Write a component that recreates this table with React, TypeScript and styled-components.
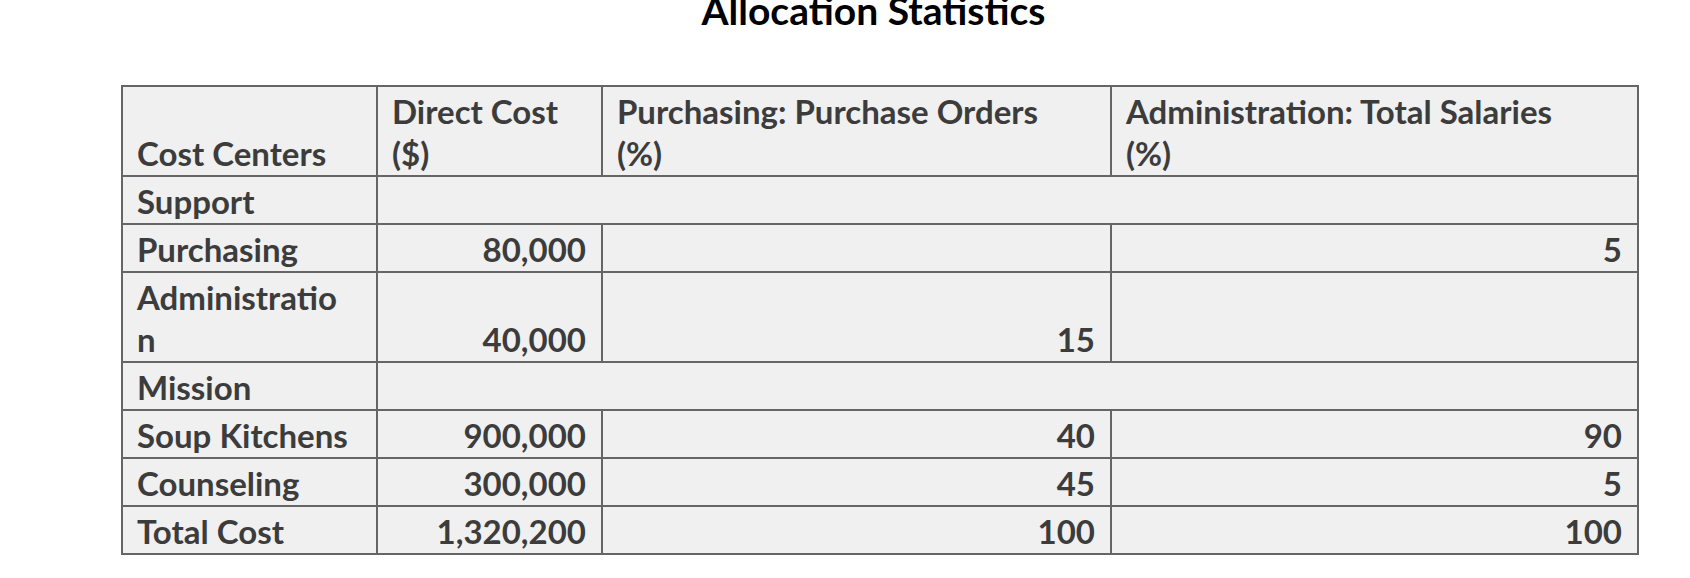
import styled, { createGlobalStyle } from "styled-components";

const GlobalStyle = createGlobalStyle`
    body {
        margin: 0;
        background: #ffffff;
        font-family: Lato, "Open Sans", sans-serif;
    }
`;

const Page = styled.div`
    width: 1690px;
    height: 578px;
    overflow: hidden;
    padding-left: 121px;
    box-sizing: border-box;
`;

const Wrap = styled.div`
    width: 1516px;
`;

const Title = styled.h1`
    margin: -13px 11px 0 0;
    height: 46px;
    line-height: 46px;
    font-size: 39px;
    font-weight: 700;
    color: #000000;
    text-align: center;
`;

const Table = styled.table`
    margin-top: 52px;
    width: 1516px;
    border-collapse: collapse;
    table-layout: fixed;
    background: #f0f0f0;
    color: #3c3c3c;
    font-size: 33px;
    font-weight: 700;
    line-height: 42px;
`;

const Cell = styled.td<{ $num?: boolean; $label?: boolean }>`
    border: 2px solid #656565;
    padding: 3px ${(p) => (p.$num ? "15px" : p.$label ? "26px" : "8px")} 1px 14px;
    vertical-align: bottom;
    text-align: ${(p) => (p.$num ? "right" : "left")};
    overflow-wrap: anywhere;
`;

const Unit = styled.span`
    display: block;
`;

interface IRow {
    name: string;
    direct?: string;
    purchasing?: string;
    admin?: string;
    group?: boolean;
}

const rows: IRow[] = [
    { name: "Support", group: true },
    { name: "Purchasing", direct: "80,000", admin: "5" },
    { name: "Administration", direct: "40,000", purchasing: "15" },
    { name: "Mission", group: true },
    { name: "Soup Kitchens", direct: "900,000", purchasing: "40", admin: "90" },
    { name: "Counseling", direct: "300,000", purchasing: "45", admin: "5" },
    { name: "Total Cost", direct: "1,320,200", purchasing: "100", admin: "100" },
];

function App() {
    return (
        <Page>
            <GlobalStyle />
            <Wrap>
                <Title>Allocation Statistics</Title>
                <Table>
                    <colgroup>
                        <col style={{ width: 255 }} />
                        <col style={{ width: 225 }} />
                        <col style={{ width: 509 }} />
                        <col style={{ width: 527 }} />
                    </colgroup>
                    <tbody>
                        <tr>
                            <Cell $label>Cost Centers</Cell>
                            <Cell>
                                Direct Cost <Unit>($)</Unit>
                            </Cell>
                            <Cell>
                                Purchasing: Purchase Orders <Unit>(%)</Unit>
                            </Cell>
                            <Cell>
                                Administration: Total Salaries <Unit>(%)</Unit>
                            </Cell>
                        </tr>
                        {rows.map((row) =>
                            row.group ? (
                                <tr key={row.name}>
                                    <Cell $label>{row.name}</Cell>
                                    <Cell colSpan={3} />
                                </tr>
                            ) : (
                                <tr key={row.name}>
                                    <Cell $label>{row.name}</Cell>
                                    <Cell $num>{row.direct}</Cell>
                                    <Cell $num>{row.purchasing}</Cell>
                                    <Cell $num>{row.admin}</Cell>
                                </tr>
                            )
                        )}
                    </tbody>
                </Table>
            </Wrap>
        </Page>
    );
}

export default App;
